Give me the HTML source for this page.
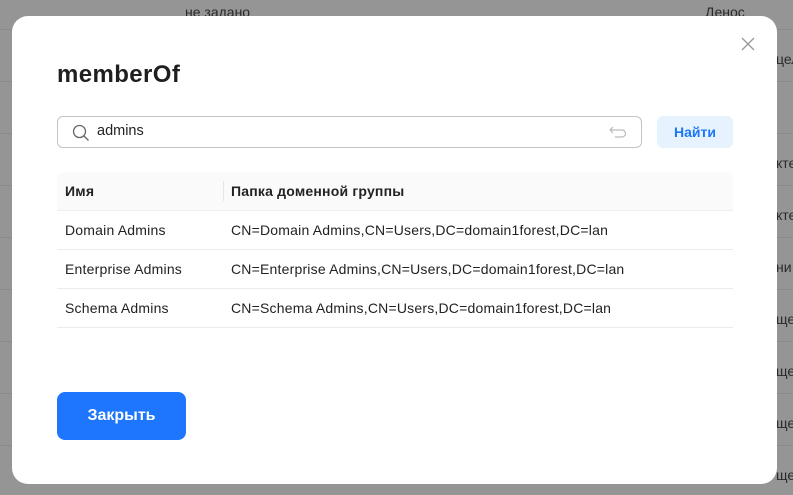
<!DOCTYPE html>
<html><head><meta charset="utf-8"><style>
*{box-sizing:border-box;margin:0;padding:0}
body{width:793px;height:495px;overflow:hidden;background:#959595;font-family:"Liberation Sans","DejaVu Sans",sans-serif;position:relative}
.bgline{position:absolute;left:0;right:0;height:1px;background:#8a8a8a}
.bgt{position:absolute;font-size:14px;color:#2a2a2a}
.modal{position:absolute;left:12px;top:16px;width:765px;height:468px;background:#fff;border-radius:16px}
.close{position:absolute;left:729px;top:21px}
h1{position:absolute;left:45px;top:45px;font-size:24px;letter-spacing:0.4px;font-weight:bold;color:#1f1f1f}
.search{position:absolute;left:45px;top:100px;width:585px;height:32px;border:1px solid #c4c4c4;border-radius:6px}
.search .q{position:absolute;left:14px;top:7px}
.search span{position:absolute;left:39px;top:6px;font-size:14.5px;color:#222}
.search .u{position:absolute;left:550px;top:8px}
.find{position:absolute;left:645px;top:100px;width:76px;height:32px;background:#e6f3ff;border-radius:6px;color:#1c76f5;font-size:14px;font-weight:bold;text-align:center;line-height:32px}
table{position:absolute;left:45px;top:156px;width:676px;border-collapse:collapse;font-size:14px;color:#222}
th{background:#fafafa;text-align:left;font-weight:bold;height:38px;padding-left:8px;border-bottom:1px solid #eee;position:relative;letter-spacing:0.2px}
th:first-child{border-radius:8px 0 0 0;width:166px}
th:last-child{border-radius:0 8px 0 0}
th.d::before{content:"";position:absolute;left:0;top:9px;height:20px;width:1px;background:#e6e6e6}
td{height:39px;padding-left:8px;border-bottom:1px solid #ebebeb;letter-spacing:0.2px}
.btn{position:absolute;left:45px;top:376px;width:129px;height:48px;background:#1d76fd;border-radius:8px;color:#fff;font-size:16px;font-weight:bold;text-align:center;line-height:48px}
</style></head><body>
<div class="bgline" style="top:29px"></div><div class="bgline" style="top:81px"></div><div class="bgline" style="top:133px"></div><div class="bgline" style="top:185px"></div><div class="bgline" style="top:237px"></div><div class="bgline" style="top:289px"></div><div class="bgline" style="top:341px"></div><div class="bgline" style="top:393px"></div><div class="bgline" style="top:445px"></div>
<div class="bgt" style="left:185px;top:4px">не задано</div>
<div class="bgt" style="left:705px;top:4px">Денос</div>
<div class="bgt" style="left:776px;top:51px">цел</div>
<div class="bgt" style="left:776px;top:155px">кте</div>
<div class="bgt" style="left:776px;top:207px">кте</div>
<div class="bgt" style="left:776px;top:259px">ни</div>
<div class="bgt" style="left:776px;top:311px">ще</div>
<div class="bgt" style="left:776px;top:363px">ще</div>
<div class="bgt" style="left:776px;top:415px">ще</div>
<div class="bgt" style="left:776px;top:467px">ще</div>
<div class="modal">
<svg class="close" width="14" height="14" viewBox="0 0 14 14"><path d="M1 1L13 13M13 1L1 13" stroke="#999" stroke-width="1.3"/></svg>
<h1>memberOf</h1>
<div class="search">
<svg class="q" width="18" height="18" viewBox="0 0 18 18"><circle cx="7.5" cy="7.5" r="6" fill="none" stroke="#666" stroke-width="1.3"/><path d="M12 12L16.5 16.5" stroke="#666" stroke-width="1.3"/></svg>
<span>admins</span>
<svg class="u" width="20" height="14" viewBox="0 0 20 14"><path d="M5 2L2 5L5 8M2 5H14A3.5 3.5 0 0 1 14 12H7" fill="none" stroke="#bbb" stroke-width="1.2"/></svg>
</div>
<div class="find">Найти</div>
<table>
<tr><th>Имя</th><th class="d">Папка доменной группы</th></tr>
<tr><td>Domain Admins</td><td>CN=Domain Admins,CN=Users,DC=domain1forest,DC=lan</td></tr>
<tr><td>Enterprise Admins</td><td>CN=Enterprise Admins,CN=Users,DC=domain1forest,DC=lan</td></tr>
<tr><td>Schema Admins</td><td>CN=Schema Admins,CN=Users,DC=domain1forest,DC=lan</td></tr>
</table>
<div class="btn">Закрыть</div>
</div>
</body></html>
